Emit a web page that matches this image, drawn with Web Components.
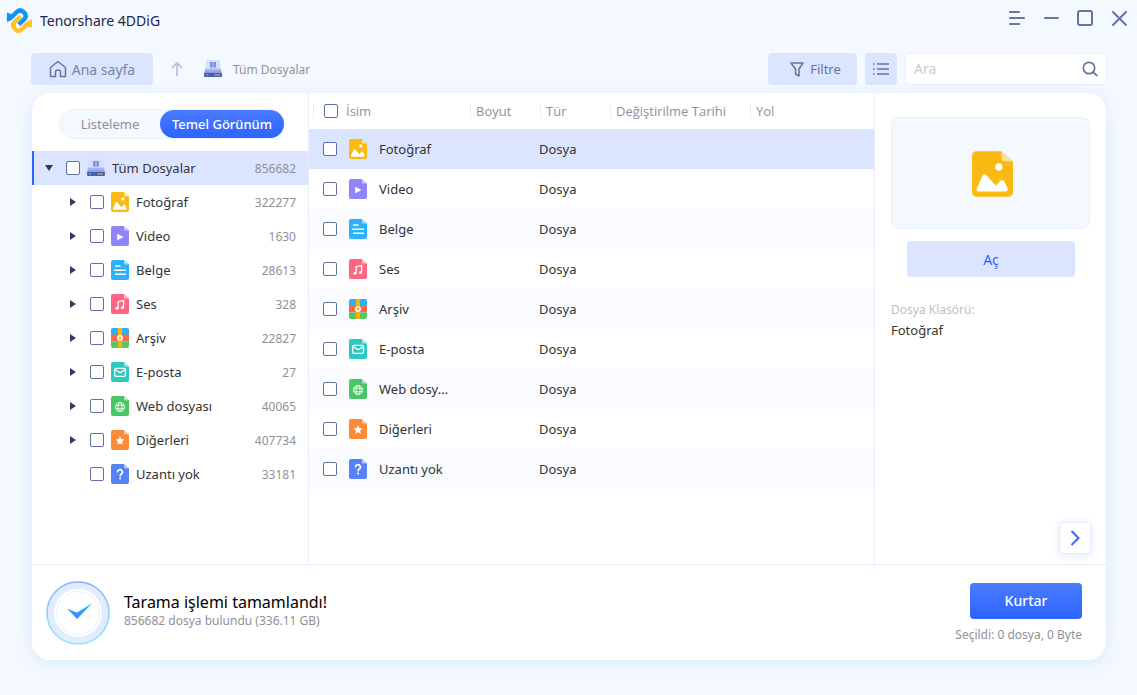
<!DOCTYPE html>
<html lang="tr">
<head>
<meta charset="utf-8">
<meta name="viewport" content="width=device-width, initial-scale=1">
<title>Tenorshare 4DDiG</title>
<style>
  body { margin: 0; font-family: "Noto Sans", "Open Sans", sans-serif; font-size: 13px; line-height: 20px; color: #333; background: #f4f8ff; }
</style>
</head>
<body>
<app-window></app-window>

<script>
const BASE = `
  *, *::before, *::after { box-sizing: border-box; }
  button, input { font: inherit; color: inherit; margin: 0; }
  button { border: 0; padding: 0; background: none; cursor: pointer; }
  svg { display: block; }
  input[type="checkbox"] {
    appearance: none; flex: none; width: 14px; height: 14px; margin: 0;
    border: 1px solid #5f71a3; border-radius: 2px; background: #fff;
  }
  input[type="checkbox"]:checked { background: #3a6fff; border-color: #3a6fff; }
`;

class Base extends HTMLElement {
  connectedCallback() {
    if (this.shadowRoot) return;
    const root = this.attachShadow({ mode: "open" });
    root.innerHTML = `<style>${BASE}${this.styles()}</style>${this.markup()}`;
  }
  styles() { return ""; }
  markup() { return "<slot></slot>"; }
}

const FILES = [
  { name: "Fotoğraf", kind: "photo", count: "322277" },
  { name: "Video", kind: "video", count: "1630" },
  { name: "Belge", kind: "doc", count: "28613" },
  { name: "Ses", kind: "audio", count: "328" },
  { name: "Arşiv", kind: "archive", count: "22827" },
  { name: "E-posta", kind: "mail", count: "27" },
  { name: "Web dosyası", kind: "web", count: "40065", short: "Web dosy..." },
  { name: "Diğerleri", kind: "other", count: "407734" },
  { name: "Uzantı yok", kind: "none", count: "33181", leaf: true }
];

/* Document-shaped type icons, drawn on an 18 x 20 grid */
const page = (color, glyph) => `
  <path fill="${color}" d="M2 0H13L18 4.4V18a2 2 0 0 1-2 2H2a2 2 0 0 1-2-2V2a2 2 0 0 1 2-2Z"/>
  <path fill="#fff" fill-opacity=".55" d="M13 0V3.2a1.2 1.2 0 0 0 1.2 1.2H18Z"/>${glyph}`;
const GLYPHS = {
  photo: page("#fbb914", `<circle cx="11.8" cy="6.9" r="1.6" fill="#fff"/>
    <path fill="#fff" d="M2 16.6 4.6 10.7Q5.4 9.5 6.5 10.7L10.4 15.2 12.2 13.2Q13.3 12 14.2 13.3L15.7 16.6Q15.8 17.6 14.9 17.7H2.8Q1.8 17.6 2 16.6Z"/>`),
  video: page("#8f84fb", `<path fill="#fff" stroke="#fff" stroke-width="1" stroke-linejoin="round" d="M6.7 8.400V13.600L11.600 11Z"/>`),
  doc: page("#2cb2fd", `<path stroke="#fff" stroke-width="1.5" d="M4 6H9.5M3 10.2H15M4 14.3H15"/>`),
  audio: page("#fd6683", `<path fill="none" stroke="#fff" stroke-width="1.3" d="M7.2 14.2V7.7L12.6 6.5V13.2"/><circle cx="6" cy="14.3" r="1.5" fill="#fff"/><circle cx="11.5" cy="13.4" r="1.5" fill="#fff"/>`),
  archive: `<path fill="#29b0f8" d="M2 0H16a2 2 0 0 1 2 2V7H0V2A2 2 0 0 1 2 0Z"/><path fill="#fd6945" d="M0 6.5H18V13.5H0Z"/>
    <path fill="#4fc866" d="M0 13.5H18V18a2 2 0 0 1-2 2H2a2 2 0 0 1-2-2Z"/><path fill="#fbb400" d="M7 0H11V20H7Z"/><circle cx="9" cy="10" r="2.2" fill="#fbb400" stroke="#fff" stroke-width="1.5"/>`,
  mail: page("#2cc9c3", `<rect x="3.7" y="6.3" width="10.8" height="8" rx="1.4" fill="none" stroke="#fff" stroke-width="1.3"/><path fill="none" stroke="#fff" stroke-width="1.3" d="M4.5 8 9.1 10.8 13.7 8"/>`),
  web: page("#4bc667", `<g fill="none" stroke="#fff" stroke-width=".9"><circle cx="9" cy="11" r="4.5"/><ellipse cx="9" cy="11" rx="2" ry="4.5"/><path d="M4.9 9.3H13.1M4.9 12.7H13.1"/></g>`),
  other: page("#fd8b35", `<path fill="#fff" d="M9 6.3 10.3 9.1 13.3 9.5 11.1 11.6 11.7 14.7 9 13.2 6.3 14.7 6.9 11.6 4.7 9.5 7.7 9.1Z"/>`),
  none: page("#5582f6", `<path fill="none" stroke="#fff" stroke-width="1.6" d="M6.7 8.4A2.4 2.3 0 1 1 10.3 10Q9.1 10.8 9.1 12.4"/><circle cx="9.1" cy="14.6" r="1" fill="#fff"/>`),
  drive: `<defs><linearGradient id="d" x2="0" y2="1"><stop stop-color="#b4c0f4"/><stop offset="1" stop-color="#7f92e6"/></linearGradient></defs>
    <path fill="#d8dffa" d="M3.500 1H14.500Q16 1 16 2.500L17 11H1L2 2.500Q2 1 3.500 1Z"/><path fill="#7890e6" d="M6 3H8.700V8.500H6ZM9.300 3H12V8.500H9.300Z"/>
    <path fill="url(#d)" d="M1.200 9.500H16.800L18 14.500H0Z"/><rect y="14" width="18" height="4" rx="1" fill="#4a5fae"/>
    <path fill="#78dfff" d="M2.500 15.500H4V16.500H2.500Z"/><path fill="#ffb65b" d="M10.500 15.500H16V16.500H10.500Z"/>`
};

customElements.define("file-icon", class extends Base {
  styles() { return `:host { display: block; flex: none; width: 18px; height: 20px; } svg { width: 100%; height: 100%; }`; }
  markup() { return `<svg viewBox="0 0 18 20" aria-hidden="true">${GLYPHS[this.getAttribute("kind")]}</svg>`; }
});

customElements.define("title-bar", class extends Base {
  styles() { return `
    :host { display: flex; justify-content: space-between; align-items: center; height: 40px; padding: 0 8px 0 6px; color: #222548; }
    .brand { display: flex; align-items: center; gap: 8px; font-size: 14px; line-height: 22px; }
    .brand span { padding-top: 2px; }
    .controls { display: flex; gap: 14px; padding-bottom: 4px; color: #64769f; }
    .controls button { width: 20px; height: 20px; }
    .controls svg { width: 20px; height: 20px; }`; }
  markup() { return `
    <div class="brand">
      <svg width="26" height="26" viewBox="0 0 26 26" fill="none" aria-hidden="true">
        <path fill="#0d96f6" d="M1 5.500 6 7.500V13L1 15Z"/>
        <path fill="#ffc526" d="M26 12V20.500L21 19.500V14.500Z"/>
        <path stroke="#0d96f6" stroke-width="4.500" d="M1.500 10Q4 11.500 6.800 9L10 5.700Q14 1.500 18 5.300Q21.500 9 18 12.500L12.800 17.500"/>
        <path stroke="#ffc526" stroke-width="4.500" d="M25.500 17Q22.500 15.500 20 18L16.500 21.700Q12.500 25.500 9 22Q5.500 18.200 9 14.700L14.700 9.500"/>
      </svg>
      <span>Tenorshare 4DDiG</span>
    </div>
    <div class="controls">
      <button aria-label="Menü"><svg viewBox="0 0 20 20" fill="none" stroke="currentColor" stroke-width="2" stroke-linecap="round"><path d="M3 4H12M3 10H17M3 16H12"/></svg></button>
      <button aria-label="Küçült"><svg viewBox="0 0 20 20" fill="none" stroke="currentColor" stroke-width="2" stroke-linecap="round"><path d="M4 10H17"/></svg></button>
      <button aria-label="Büyüt"><svg viewBox="0 0 20 20" fill="none" stroke="currentColor" stroke-width="2"><rect x="3" y="3" width="14" height="14" rx="2"/></svg></button>
      <button aria-label="Kapat"><svg viewBox="0 0 20 20" fill="none" stroke="currentColor" stroke-width="2" stroke-linecap="round"><path d="M4 4 17 17M17 4 4 17"/></svg></button>
    </div>`; }
});

customElements.define("tool-bar", class extends Base {
  styles() { return `
    :host { display: flex; align-items: center; gap: 8px; padding: 13px 30px 8px 31px; }
    .btn { display: flex; align-items: center; justify-content: center; height: 32px; border-radius: 4px; background: #dbe5ff; color: #64769f; }
    .home { width: 122px; gap: 5px; font-size: 14px; color: #7c84a0; }
    .home span, .crumb span { padding-top: 2px; }
    .filter { width: 89px; gap: 6px; padding-left: 6px; }
    .list { width: 32px; }
    .up { width: 32px; height: 32px; display: grid; place-items: center; }
    .crumb { display: flex; align-items: center; gap: 11px; flex: 1; padding-left: 3px; font-size: 12px; color: #8f939c; text-decoration: none; }
    .search { display: flex; align-items: center; width: 202px; height: 32px; padding: 0 8px; border: 1px solid #e8effb; border-radius: 4px; background: #fff; }
    .search input { flex: 1; min-width: 0; border: 0; padding: 0; background: none; outline: none; font-size: 14px; }
    .search input::placeholder { color: #ccc; opacity: 1; }`; }
  markup() { return `
    <button class="btn home">
      <svg width="18" height="18" viewBox="0 0 18 18" fill="none" stroke="#64769f" stroke-width="1.500" stroke-linejoin="round" aria-hidden="true"><path d="M1.500 7.500 9 1.500 16.500 7.500V16.500H11.500V12Q11.500 10 9 10Q6.500 10 6.500 12V16.500H1.500Z"/></svg>
      <span>Ana sayfa</span>
    </button>
    <button class="up" aria-label="Yukarı"><svg width="12" height="16" viewBox="0 0 12 16" fill="none" stroke="#c0c9df" stroke-width="2" aria-hidden="true"><path d="M6 15V2M1 7 6 2 11 7"/></svg></button>
    <a class="crumb" href="#"><file-icon kind="drive"></file-icon><span>Tüm Dosyalar</span></a>
    <button class="btn filter">
      <svg width="14" height="15" viewBox="0 0 14 15" fill="none" stroke="currentColor" stroke-width="1.500" stroke-linejoin="round" aria-hidden="true"><path d="M1 1H13L9 7V14L5.500 12V7Z"/></svg>
      <span>Filtre</span>
    </button>
    <button class="btn list" aria-label="Liste görünümü"><svg width="18" height="14" viewBox="0 0 18 14" fill="none" stroke="currentColor" stroke-width="1.500" aria-hidden="true"><path d="M5 2H17M5 7H17M5 12H17M1 2H2.500M1 7H2.500M1 12H2.500"/></svg></button>
    <div class="search">
      <input type="text" aria-label="Ara" placeholder="Ara">
      <svg width="16" height="16" viewBox="0 0 16 16" fill="none" stroke="#64769f" stroke-width="1.700" stroke-linecap="round" aria-hidden="true"><circle cx="7" cy="7" r="5.700"/><path d="M11.300 11.300 14.800 14.500"/></svg>
    </div>`; }
});

customElements.define("view-switch", class extends Base {
  styles() { return `
    :host { display: flex; box-sizing: border-box; margin: 16px 23px 12px 27px; height: 30px; padding: 1px; border-radius: 15px; background: #f4f8ff; box-shadow: inset 0 0 0 1px #edf3fd; }
    button { flex: 1; height: 28px; border-radius: 14px; color: #8d9098; }
    button[aria-pressed="true"] { flex: 0 0 124px; color: #fff; background: linear-gradient(#4a7cff, #2c64ff); font-weight: 500; }`; }
  markup() { return `<button aria-pressed="false">Listeleme</button><button aria-pressed="true">Temel Görünüm</button>`; }
});

customElements.define("tree-row", class extends Base {
  styles() { return `
    :host { display: flex; align-items: center; height: 34px; padding: 0 12px 0 36px; }
    :host([root]) { padding-left: 10px; border-left: 2px solid #2c64ff; background: #dbe5ff; }
    .caret { width: 10px; height: 10px; display: grid; place-items: center; margin-right: 12px; }
    :host([leaf]) .caret { visibility: hidden; }
    :host([root]) .caret { transform: rotate(90deg); }
    label { display: flex; align-items: center; flex: 1; }
    file-icon { margin: 0 7px; }
    .count { padding-top: 1px; font-size: 12px; color: #8f9198; }`; }
  markup() { return `
    <button class="caret" aria-label="Aç veya kapat"><svg width="6" height="8" viewBox="0 0 6 8" aria-hidden="true"><path fill="#333b5c" d="M0 0 6 4 0 8Z"/></svg></button>
    <label><input type="checkbox"><file-icon kind="${this.getAttribute("kind")}"></file-icon><slot></slot></label>
    <span class="count">${this.getAttribute("count")}</span>`; }
});

customElements.define("file-tree", class extends Base {
  styles() { return `:host { display: block; border-right: 1px solid #e9ecfb; }`; }
  markup() { return `<view-switch></view-switch>
    <tree-row root kind="drive" count="856682">Tüm Dosyalar</tree-row>
    ${FILES.map(f => `<tree-row kind="${f.kind}" count="${f.count}" ${f.leaf ? "leaf" : ""}>${f.name}</tree-row>`).join("")}`; }
});

customElements.define("file-table", class extends Base {
  styles() { return `
    :host { display: block; border-right: 1px solid #e9ecfb; }
    table { width: 100%; table-layout: fixed; border-collapse: collapse; }
    thead { font-family: "Open Sans", "Noto Sans", sans-serif; }
    th { height: 36px; padding: 0 0 0 7px; text-align: left; font-weight: 400; color: #8f9198; white-space: nowrap; }
    th:first-child { padding-left: 4px; }
    th .cell { display: flex; align-items: center; height: 14px; padding-left: 5px; border-left: 1px solid #e9ecfb; }
    th:first-child .cell { padding-left: 10px; gap: 8px; }
    td { height: 40px; padding: 0 0 0 6px; }
    td:first-child { padding-left: 14px; }
    tbody tr:nth-child(odd) { background: #f9fbff; }
    tbody tr:first-child { background: #dbe5ff; }
    label { display: flex; align-items: center; white-space: nowrap; }
    file-icon { margin: 0 12px; }
    .name { width: 154px; } .size, .type { width: 70px; } .date { width: 140px; }`; }
  markup() { return `
    <table>
      <colgroup><col class="name"><col class="size"><col class="type"><col class="date"><col></colgroup>
      <thead><tr>
        <th><label class="cell"><input type="checkbox"><span>İsim</span></label></th>
        <th><div class="cell">Boyut</div></th><th><div class="cell">Tür</div></th>
        <th><div class="cell">Değiştirilme Tarihi</div></th><th><div class="cell">Yol</div></th>
      </tr></thead>
      <tbody>${FILES.map(f => `<tr><td><label><input type="checkbox"><file-icon kind="${f.kind}"></file-icon><span>${f.short || f.name}</span></label></td><td></td><td>Dosya</td><td></td><td></td></tr>`).join("")}</tbody>
    </table>`; }
});

customElements.define("preview-pane", class extends Base {
  styles() { return `
    :host { display: flex; flex-direction: column; padding: 24px 16px 10px; }
    .thumb { display: grid; place-items: center; height: 112px; padding: 2px 0 0 4px; border: 1px solid #eaf0fa; border-radius: 8px; background: #f4f8ff; }
    .thumb file-icon { width: 41px; height: 46px; }
    .open { height: 36px; margin: 12px 15px 23px 16px; padding-top: 1px; border-radius: 4px; background: #dbe5ff; color: #2c64ff; font-size: 14px; }
    dl { margin: 0; } dt { font-size: 12px; color: #bfbfbf; } dd { margin: 0; }
    .next { display: grid; place-items: center; width: 32px; height: 32px; margin: auto -1px 0 auto; border: 1px solid #e6ecfb; border-radius: 4px; background: #fff; box-shadow: 0 1px 8px #dfe8fb; }`; }
  markup() { return `
    <div class="thumb"><file-icon kind="photo"></file-icon></div>
    <button class="open">Aç</button>
    <dl><dt>Dosya Klasörü:</dt><dd>Fotoğraf</dd></dl>
    <button class="next" aria-label="Sonraki"><svg width="10" height="16" viewBox="0 0 10 16" fill="none" stroke="#3169ff" stroke-width="2" aria-hidden="true"><path d="M1.500 1 8.500 8 1.500 15"/></svg></button>`; }
});

customElements.define("status-bar", class extends Base {
  styles() { return `
    :host { box-sizing: border-box; display: flex; align-items: flex-start; gap: 14px; height: 96px; padding: 16px 24px 0 14px; border-top: 1px solid #e9ecfb; }
    .text { flex: 1; padding-top: 11px; }
    h1 { margin: 0; font-size: 16px; line-height: 20px; font-weight: 400; color: #000; }
    p { margin: 0; font-size: 12px; line-height: 18px; color: #8f9198; }
    .actions { display: flex; flex-direction: column; align-items: flex-end; gap: 7px; padding-top: 2px; }
    .recover { width: 112px; height: 36px; border-radius: 4px; color: #fff; font-size: 14px; font-weight: 500; background: linear-gradient(#4a7cff, #2c64ff); }`; }
  markup() { return `
    <svg width="64" height="64" viewBox="0 0 64 64" aria-hidden="true">
      <defs>
        <linearGradient id="ring" x2="0" y2="1"><stop stop-color="#86b1ff"/><stop offset="1" stop-color="#8eebfb"/></linearGradient>
        <linearGradient id="tick" x2="0" y2="1"><stop stop-color="#21c4fb"/><stop offset="1" stop-color="#3a80ff"/></linearGradient>
      </defs>
      <circle cx="32" cy="32" r="31" fill="#e3ebfd" stroke="url(#ring)" stroke-width="1.500"/>
      <circle cx="32" cy="32" r="24" fill="#fff"/><circle cx="32" cy="32" r="21.500" fill="none" stroke="#e1f6ff"/>
      <path fill="url(#tick)" d="M21 27.500 31 31.500 46.500 22 31 38Z"/>
    </svg>
    <div class="text"><h1>Tarama işlemi tamamlandı!</h1><p>856682 dosya bulundu (336.11 GB)</p></div>
    <div class="actions"><button class="recover">Kurtar</button><p>Seçildi: 0 dosya, 0 Byte</p></div>`; }
});

customElements.define("app-window", class extends Base {
  styles() { return `
    :host { display: flex; flex-direction: column; min-height: 100vh; }
    main { flex: 1; display: flex; flex-direction: column; margin: 0 31px 35px 32px; border-radius: 18px; background: #fff; box-shadow: 0 3px 16px #d9eaff; }
    .panes { flex: 1; display: grid; grid-template-columns: 277px minmax(0, 1fr) 231px; }`; }
  markup() { return `
    <title-bar></title-bar><tool-bar></tool-bar>
    <main>
      <div class="panes"><file-tree></file-tree><file-table></file-table><preview-pane></preview-pane></div>
      <status-bar></status-bar>
    </main>`; }
});
</script>
</body>
</html>
